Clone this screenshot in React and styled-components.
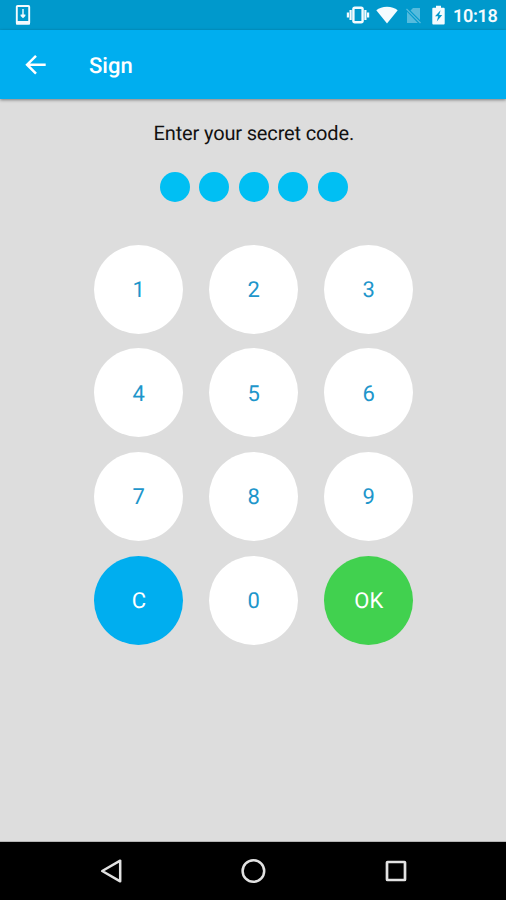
import React from 'react'
import styled, { createGlobalStyle } from 'styled-components'

const GlobalStyle = createGlobalStyle`
    * {
        box-sizing: border-box;
    }

    body {
        margin: 0;
        font-family: Roboto, 'Liberation Sans', sans-serif;
        text-rendering: geometricPrecision;
    }
`

const Screen = styled.div`
    display: flex;
    flex-direction: column;
    width: 506px;
    height: 900px;
    background: #dddddd;
    overflow: hidden;
`

const StatusBar = styled.div`
    display: flex;
    align-items: center;
    flex: none;
    height: 30px;
    padding: 0 9px 0 15px;
    background: #0099cc;
    color: #f4fbfe;

    svg {
        display: block;
        flex: none;
    }
`

const StatusIcons = styled.div`
    display: flex;
    align-items: center;
    margin-left: auto;
`

const StatusIcon = styled.svg`
    margin-right: ${props => props.$gap}px;
    opacity: ${props => (props.$dim ? 0.35 : 1)};
`

const Clock = styled.span`
    font-size: 18px;
    line-height: 30px;
    font-weight: 600;
    letter-spacing: -0.3px;
    padding-top: 3px;
    width: 44px;
    white-space: nowrap;
`

const AppBar = styled.header`
    display: flex;
    align-items: center;
    flex: none;
    height: 69px;
    padding-left: 25px;
    background: #00aeef;
    color: #ffffff;
    box-shadow: 0 1px 3px rgba(0, 0, 0, 0.45);
`

const BackButton = styled.button`
    display: flex;
    width: 22px;
    height: 22px;
    padding: 0;
    border: 0;
    background: none;
    color: inherit;
`

const Title = styled.h1`
    margin: 4px 0 0 42px;
    font-size: 22px;
    line-height: 28px;
    font-weight: 500;
`

const Content = styled.main`
    display: flex;
    flex: 1;
    flex-direction: column;
    align-items: center;
    padding: 20px 0 0 1.6px;
    border-bottom: 1px solid #b5b5b5;
`

const Prompt = styled.p`
    margin: 0;
    font-size: 20px;
    line-height: 28px;
    letter-spacing: -0.15px;
    color: #111111;
`

const Dots = styled.div`
    display: flex;
    gap: 9.4px;
    margin-top: 25px;
`

const Dot = styled.span`
    width: 30px;
    height: 30px;
    border-radius: 50%;
    background: #00bff3;
`

const Keypad = styled.div`
    display: grid;
    grid-template-columns: repeat(3, 89px);
    gap: 14.7px 26px;
    margin-top: 42.5px;
`

const keyColors = {
    digit: { background: '#ffffff', color: '#1e96cb' },
    clear: { background: '#00aeef', color: '#ffffff' },
    confirm: { background: '#41d14f', color: '#ffffff' },
}

const Key = styled.button`
    height: 89px;
    padding: 3px 0 0;
    border: 0;
    border-radius: 50%;
    background: ${props => keyColors[props.$kind].background};
    color: ${props => keyColors[props.$kind].color};
    font-family: inherit;
    font-size: 22px;
    text-rendering: inherit;
`

const NavBar = styled.nav`
    display: flex;
    align-items: center;
    justify-content: space-between;
    flex: none;
    height: 58px;
    padding: 0 97px 0 99px;
    background: #000000;
    color: #e2e2e2;
`

const keys = [
    '1',
    '2',
    '3',
    '4',
    '5',
    '6',
    '7',
    '8',
    '9',
    { label: 'C', kind: 'clear' },
    '0',
    { label: 'OK', kind: 'confirm' },
].map(key => (typeof key === 'string' ? { label: key, kind: 'digit' } : key))

const DownloadIcon = () => (
    <svg width="16" height="22" viewBox="0 0 16 22" fill="none">
        <rect
            x="1.8"
            y="2"
            width="12.4"
            height="17.5"
            rx="0.8"
            stroke="currentColor"
            strokeWidth="1.9"
        />
        <path d="M1 17h14v3.5H1z" fill="currentColor" />
        <path d="M8 5v6" stroke="currentColor" strokeWidth="1.4" />
        <path d="M5.6 10.5h4.8v1.6L8 14.2l-2.4-2.1z" fill="currentColor" />
    </svg>
)

const VibrateIcon = () => (
    <StatusIcon $gap={6} width="24" height="18" viewBox="0 0 24 18" fill="none">
        <rect
            x="7.4"
            y="1.7"
            width="9.2"
            height="14.6"
            rx="1.5"
            stroke="currentColor"
            strokeWidth="2.4"
        />
        <path
            d="M4.6 4v10M19.4 4v10M1.9 6.5v5M22.1 6.5v5"
            stroke="currentColor"
            strokeWidth="2.2"
        />
    </StatusIcon>
)

const WifiIcon = () => (
    <StatusIcon $gap={8} width="22" height="18" viewBox="0 0 22 18">
        <path d="M11 17.5.3 4.2C3 2 6.7.7 11 .7s8 1.3 10.7 3.5z" fill="currentColor" />
    </StatusIcon>
)

const NoSimIcon = () => (
    <StatusIcon $gap={11} $dim width="15" height="17" viewBox="0 0 15 17" fill="none">
        <path d="M14 1v12L4.5 3.5 7 1zM1 4.8 11.8 16H1z" fill="currentColor" />
        <path d="M.5 2 14.5 16" stroke="currentColor" strokeWidth="1.3" />
    </StatusIcon>
)

const BatteryIcon = () => (
    <StatusIcon $gap={8} width="13" height="20" viewBox="0 0 13 20">
        <path
            d="M4 .8h5v2h2.8c.6 0 .9.4.9 1v14.7c0 .6-.3 1-.9 1H1.2c-.6 0-.9-.4-.9-1V3.8c0-.6.3-1 .9-1H4z"
            fill="currentColor"
        />
        <path d="M8.6 5.2 3 11.2h3.2L4.8 16.4l5.4-6.4H7.1z" fill="#0099cc" />
    </StatusIcon>
)

const BackArrow = () => (
    <svg width="22" height="22" viewBox="0 0 22 22" fill="none">
        <path
            d="M20.7 10.7H2.5M11 1.8 2.1 10.7l8.9 8.9"
            stroke="currentColor"
            strokeWidth="2.5"
        />
    </svg>
)

const App = () => {
    return (
        <Screen>
            <GlobalStyle />
            <StatusBar>
                <DownloadIcon />
                <StatusIcons>
                    <VibrateIcon />
                    <WifiIcon />
                    <NoSimIcon />
                    <BatteryIcon />
                    <Clock>10:18</Clock>
                </StatusIcons>
            </StatusBar>
            <AppBar>
                <BackButton aria-label="Back">
                    <BackArrow />
                </BackButton>
                <Title>Sign</Title>
            </AppBar>
            <Content>
                <Prompt>Enter your secret code.</Prompt>
                <Dots>
                    {[0, 1, 2, 3, 4].map(i => (
                        <Dot key={i} />
                    ))}
                </Dots>
                <Keypad>
                    {keys.map(({ label, kind }) => (
                        <Key key={label} $kind={kind}>
                            {label}
                        </Key>
                    ))}
                </Keypad>
            </Content>
            <NavBar>
                <svg width="24" height="26" viewBox="0 0 24 26" fill="none">
                    <path
                        d="M21.2 2.7v20.6L3.2 13z"
                        stroke="currentColor"
                        strokeWidth="2.5"
                        strokeLinejoin="round"
                    />
                </svg>
                <svg width="26" height="26" viewBox="0 0 26 26" fill="none">
                    <circle
                        cx="13.4"
                        cy="13"
                        r="10.8"
                        stroke="currentColor"
                        strokeWidth="2.5"
                    />
                </svg>
                <svg width="26" height="26" viewBox="0 0 26 26" fill="none">
                    <rect
                        x="4"
                        y="4"
                        width="18"
                        height="18"
                        rx="0.5"
                        stroke="currentColor"
                        strokeWidth="2.7"
                    />
                </svg>
            </NavBar>
        </Screen>
    )
}

export default App
